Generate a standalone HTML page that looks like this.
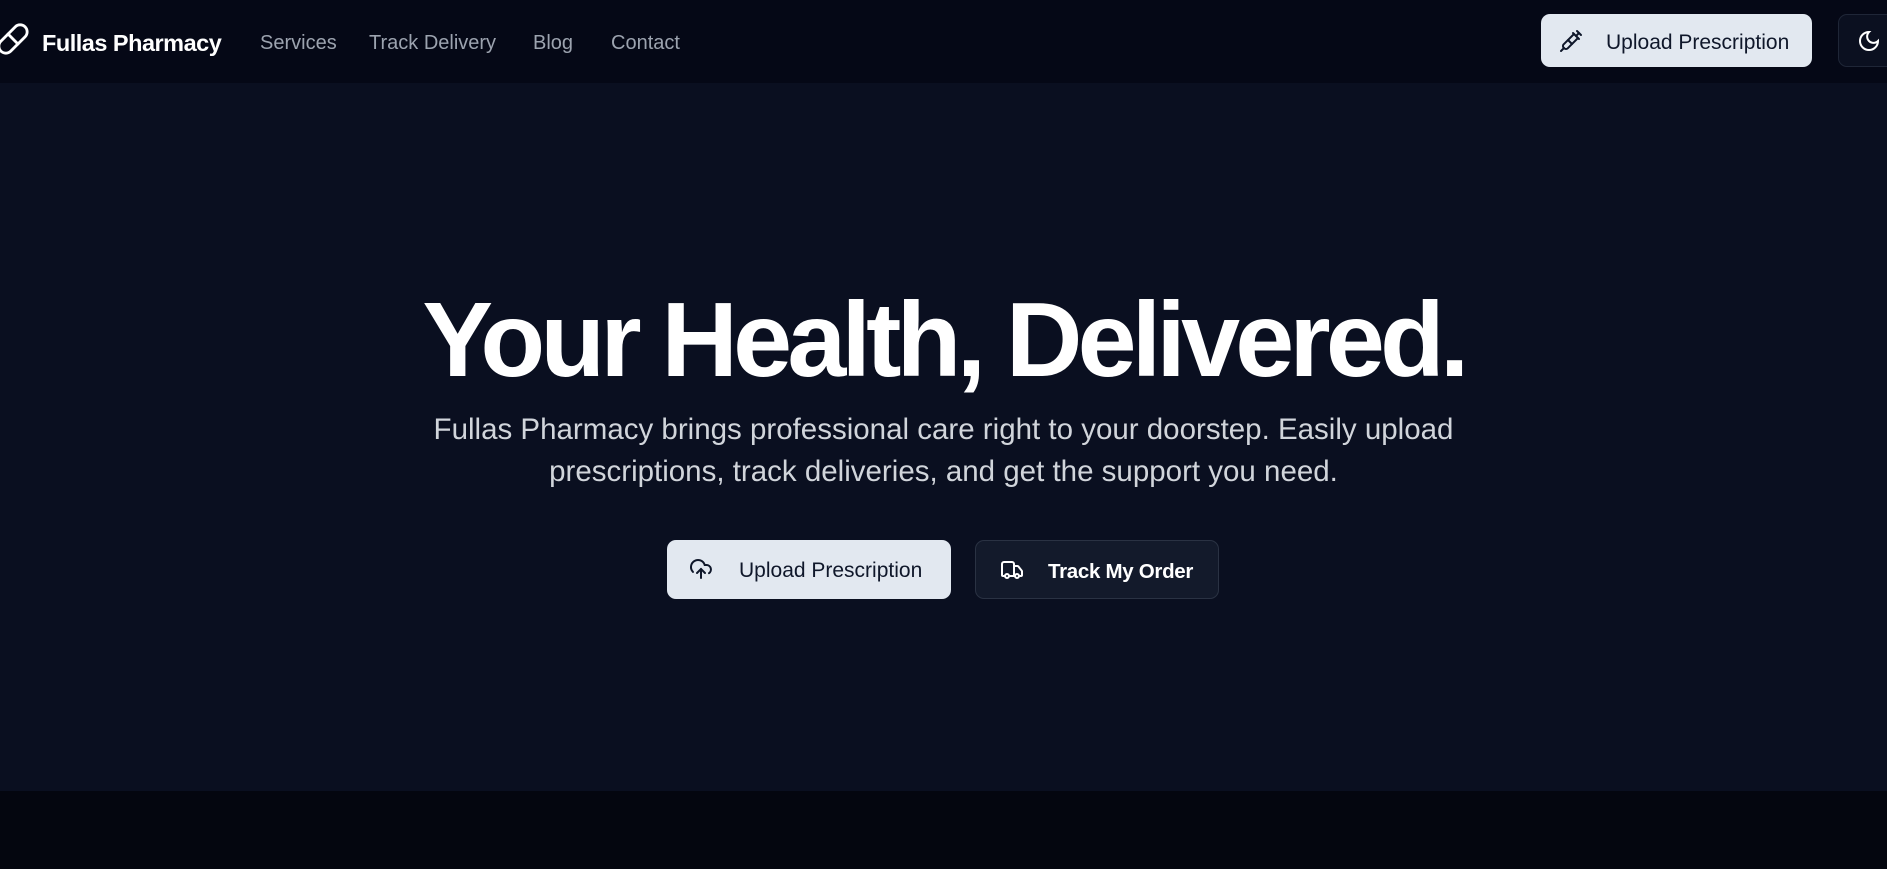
<!DOCTYPE html>
<html><head><meta charset="utf-8"><style>
*{box-sizing:border-box;margin:0;padding:0}
body{width:1887px;height:869px;overflow:hidden;background:#04060f;font-family:"Liberation Sans",sans-serif;position:relative}
.nav{position:absolute;left:0;top:0;width:1887px;height:83px;background:#050816}
.hero{position:absolute;left:0;top:83px;width:1887px;height:708px;background:#0a0f20}
.t{position:absolute;white-space:nowrap}
.link{color:#9ca3af;font-size:20px;top:32px}
.btn{position:absolute;border-radius:9px;display:flex;align-items:center}
</style></head><body>
<div class="nav"></div>
<div class="hero"></div>
<svg class="t" style="left:-4px;top:22px" width="34" height="34" viewBox="0 0 24 24" fill="none" stroke="#fff" stroke-width="2" stroke-linecap="round"><path d="M10.5 20.5 20.5 10.5a4.95 4.95 0 1 0-7-7L3.5 13.5a4.95 4.95 0 1 0 7 7Z"/><path d="m8.5 8.5 7 7"/></svg>
<div class="t" style="left:42px;top:30px;color:#fff;font-weight:bold;font-size:23.5px;letter-spacing:-0.5px">Fullas Pharmacy</div>
<div class="t link" style="left:260px">Services</div>
<div class="t link" style="left:369px">Track Delivery</div>
<div class="t link" style="left:533px">Blog</div>
<div class="t link" style="left:611px">Contact</div>
<div class="btn" style="left:1541px;top:14px;width:271px;height:53px;background:#e2e8f0">
<svg style="position:absolute;left:18px;top:15px" width="24" height="24" viewBox="0 0 24 24" fill="none" stroke="#0f172a" stroke-width="2" stroke-linecap="round"><path d="m18 2 4 4"/><path d="m17 7 3-3"/><path d="M19 9 8.7 19.3c-1 1-2.5 1-3.4 0l-.6-.6c-1-1-1-2.5 0-3.4L15 5"/><path d="m9 11 4 4"/><path d="m5 19-3 3"/><path d="m14 4 6 6"/></svg>
<span style="position:absolute;left:65px;top:17px;font-size:21px;color:#0f172a">Upload Prescription</span></div>
<div class="btn" style="left:1838px;top:14px;width:70px;height:53px;background:#0b1020;border:1px solid #1f2637">
<svg style="position:absolute;left:18px;top:14px" width="24" height="24" viewBox="0 0 24 24" fill="none" stroke="#fff" stroke-width="2"><path d="M12 3a6 6 0 0 0 9 9 9 9 0 1 1-9-9Z"/></svg></div>
<div class="t" style="left:0;width:1887px;text-align:center;top:280px;color:#fff;font-weight:bold;font-size:106px;letter-spacing:-4.8px">Your Health, Delivered.</div>
<div class="t" style="left:0;width:1887px;text-align:center;top:409px;color:#d1d5db;font-size:29.5px;line-height:42px;white-space:normal">Fullas Pharmacy brings professional care right to your doorstep. Easily upload<br>prescriptions, track deliveries, and get the support you need.</div>
<div class="btn" style="left:667px;top:540px;width:284px;height:59px;background:#e2e8f0">
<svg style="position:absolute;left:22px;top:17px" width="24" height="24" viewBox="0 0 24 24" fill="none" stroke="#0f172a" stroke-width="2" stroke-linecap="round"><path d="M4 14.9A7 7 0 1 1 15.7 8h1.8a4.5 4.5 0 0 1 2.5 8.2"/><path d="M12 12v9"/><path d="m16 16-4-4-4 4"/></svg>
<span style="position:absolute;left:72px;top:19px;font-size:21px;color:#0f172a">Upload Prescription</span></div>
<div class="btn" style="left:975px;top:540px;width:244px;height:59px;background:#131a2b;border:1px solid #2a3243">
<svg style="position:absolute;left:24px;top:17px" width="24" height="24" viewBox="0 0 24 24" fill="none" stroke="#fff" stroke-width="2" stroke-linecap="round"><path d="M14 18V6a2 2 0 0 0-2-2H4a2 2 0 0 0-2 2v11a1 1 0 0 0 1 1h2"/><path d="M15 18H9"/><path d="M19 18h2a1 1 0 0 0 1-1v-3.65a1 1 0 0 0-.22-.62L18.3 8.38A1 1 0 0 0 17.52 8H14"/><circle cx="17" cy="18" r="2"/><circle cx="7" cy="18" r="2"/></svg>
<span style="position:absolute;left:72px;top:19px;font-size:20.5px;color:#fff;font-weight:bold;letter-spacing:-0.3px">Track My Order</span></div>
</body></html>
